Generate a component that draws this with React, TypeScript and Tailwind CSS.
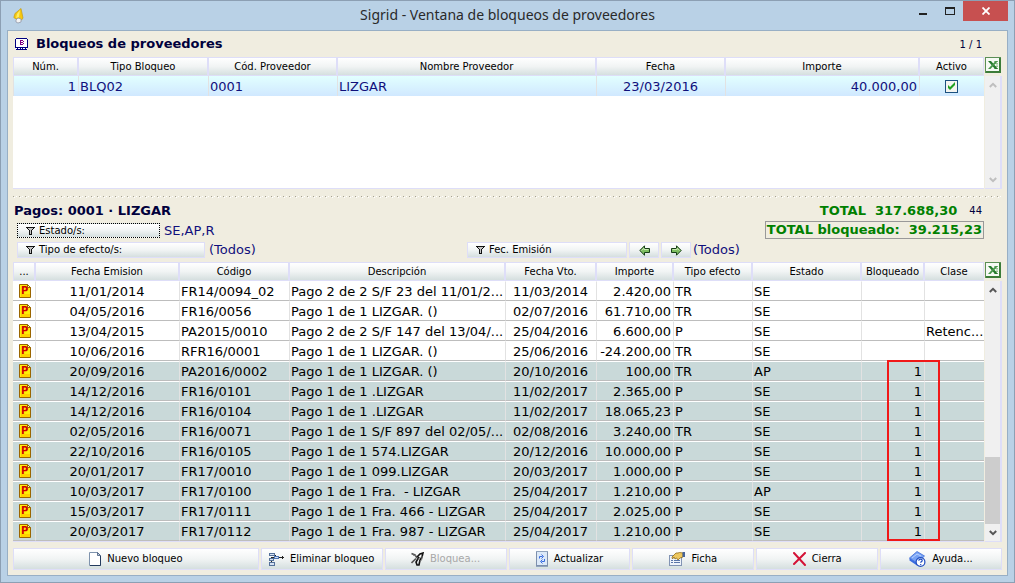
import React, { useState } from 'react';

interface Pago {
    emision: string;
    codigo: string;
    descripcion: string;
    vto: string;
    importe: string;
    tipo: string;
    estado: string;
    bloqueado?: number;
    clase?: string;
}

const pagos: Pago[] = [
    { emision: '11/01/2014', codigo: 'FR14/0094_02', descripcion: 'Pago 2 de 2 S/F 23 del 11/01/2...', vto: '11/03/2014', importe: '2.420,00', tipo: 'TR', estado: 'SE' },
    { emision: '04/05/2016', codigo: 'FR16/0056', descripcion: 'Pago 1 de 1 LIZGAR. ()', vto: '02/07/2016', importe: '61.710,00', tipo: 'TR', estado: 'SE' },
    { emision: '13/04/2015', codigo: 'PA2015/0010', descripcion: 'Pago 2 de 2 S/F 147 del 13/04/...', vto: '25/04/2016', importe: '6.600,00', tipo: 'P', estado: 'SE', clase: 'Retenc...' },
    { emision: '10/06/2016', codigo: 'RFR16/0001', descripcion: 'Pago 1 de 1 LIZGAR. ()', vto: '25/06/2016', importe: '-24.200,00', tipo: 'TR', estado: 'SE' },
    { emision: '20/09/2016', codigo: 'PA2016/0002', descripcion: 'Pago 1 de 1 LIZGAR. ()', vto: '20/10/2016', importe: '100,00', tipo: 'TR', estado: 'AP', bloqueado: 1 },
    { emision: '14/12/2016', codigo: 'FR16/0101', descripcion: 'Pago 1 de 1 .LIZGAR', vto: '11/02/2017', importe: '2.365,00', tipo: 'P', estado: 'SE', bloqueado: 1 },
    { emision: '14/12/2016', codigo: 'FR16/0104', descripcion: 'Pago 1 de 1 .LIZGAR', vto: '11/02/2017', importe: '18.065,23', tipo: 'P', estado: 'SE', bloqueado: 1 },
    { emision: '02/05/2016', codigo: 'FR16/0071', descripcion: 'Pago 1 de 1 S/F 897 del 02/05/...', vto: '02/08/2016', importe: '3.240,00', tipo: 'TR', estado: 'SE', bloqueado: 1 },
    { emision: '22/10/2016', codigo: 'FR16/0105', descripcion: 'Pago 1 de 1 574.LIZGAR', vto: '20/12/2016', importe: '10.000,00', tipo: 'P', estado: 'SE', bloqueado: 1 },
    { emision: '20/01/2017', codigo: 'FR17/0010', descripcion: 'Pago 1 de 1 099.LIZGAR', vto: '20/03/2017', importe: '1.000,00', tipo: 'P', estado: 'SE', bloqueado: 1 },
    { emision: '10/03/2017', codigo: 'FR17/0100', descripcion: 'Pago 1 de 1 Fra.  - LIZGAR', vto: '25/04/2017', importe: '1.210,00', tipo: 'P', estado: 'AP', bloqueado: 1 },
    { emision: '15/03/2017', codigo: 'FR17/0111', descripcion: 'Pago 1 de 1 Fra. 466 - LIZGAR', vto: '25/04/2017', importe: '2.025,00', tipo: 'P', estado: 'SE', bloqueado: 1 },
    { emision: '20/03/2017', codigo: 'FR17/0112', descripcion: 'Pago 1 de 1 Fra. 987 - LIZGAR', vto: '25/04/2017', importe: '1.210,00', tipo: 'P', estado: 'SE', bloqueado: 1 },
];

const face = 'bg-linear-to-b from-white via-[#f1f4f4] to-[#d5dfdf]';
const buttonBase = `flex items-center border border-[#dedef8] text-[10px] leading-none text-black ${face}`;
const iconProps = { shapeRendering: 'crispEdges' as const, className: 'shrink-0' };

const FlameIcon = () => (
    <svg width="12" height="16" viewBox="0 0 12 16">
        <path d="M8 .5 10 10 8.5 12 3 11 .8 9.500 2 5.500Z" fill="#f6c80e" stroke="#c39a18" strokeWidth=".7" />
        <path d="M7 2 4 6 3 10l3-1Z" fill="#ffec62" />
        <path d="m3 12 2-2 3 1v3l-3 1-2-1Z" fill="#f4f4f4" stroke="#9298a8" strokeWidth=".8" />
    </svg>
);

const BloqueoIcon = () => (
    <svg width="13" height="12" viewBox="0 0 13 12" {...iconProps}>
        <path d="M1 0h11v1h1v9h-1v1H1v-1H0V1h1Z" fill="#000080" />
        <path d="M1 1h11v8H1Z" fill="#fff" />
        <path d="M1 10h1v1H1ZM3 10h2v1H3ZM6 10h1v1H6ZM8 10h2v1H8ZM11 10h1v1h-1Z" fill="#fff" />
        <path d="M1 11h11v1H1Z" fill="#000080" />
        <path d="M5 2h3v1H5ZM5 4h3v1H5ZM5 6h3v1H5ZM5 2h1v5H5ZM8 3h1v1H8ZM8 5h1v1H8Z" fill="#800080" />
    </svg>
);

const PagoIcon = () => (
    <svg width="12" height="14" viewBox="0 0 12 14" className="mx-auto">
        <path d="M.5.5h8l3 3v10H.5Z" fill="#ffee0a" stroke="#9a6500" />
        <path d="M2 10h9v3H2Z" fill="#ffd200" />
        <path d="M8.500.5v3h3Z" fill="#fff6b0" stroke="#9a6500" />
        <text x="2" y="10" fontFamily="DejaVu Sans" fontSize="10" fontWeight="bold" fill="#d00000">P</text>
    </svg>
);

const ExcelIcon = () => (
    <svg width="16" height="16" viewBox="0 0 16 16">
        <rect x=".5" y=".5" width="15" height="15" fill="#f6faf4" stroke="#5b8f56" />
        <path d="M15 1v14H1" fill="none" stroke="#3c7c38" strokeWidth="2" />
        <path d="M9 4.500h4M10 6.500h3M11 8h2M10 9.500h3M9 11.500h4" stroke="#7fb276" strokeWidth=".8" />
        <path d="M3 4h3l7 8h-3Z" fill="#257a2c" />
        <path d="M10.500 4h2.500L5.500 12H3Z" fill="#47964a" />
    </svg>
);

const FilterIcon = () => (
    <svg width="9" height="8" viewBox="0 0 9 8" {...iconProps}>
        <path d="M0 0h9v1H8v1H7v1H6v5H3V3H2V2H1V1H0Z" fill="#111" />
        <path d="M2 1h5v1H6v1H5v4H4V3H3V2H2Z" fill="#c4c4c4" />
    </svg>
);

const ArrowIcon = ({ right }: { right?: boolean }) => (
    <svg width="11" height="11" viewBox="0 0 11 11" className={right ? '-scale-x-100' : ''}>
        <path d="M.8 5.500 5.500.8v2.700h5v4h-5v2.700Z" fill="#7dbd60" stroke="#173f17" />
        <path d="M2.500 5.500 5 3.200v1.300h4.500" fill="none" stroke="#c6e8ae" />
    </svg>
);

const PageIcon = () => (
    <svg width="12" height="14" viewBox="0 0 12 14">
        <path d="M.5.5h8l3 3v10H.5Z" fill="#fff" stroke="#7f93ad" />
        <path d="M11.500 4v9.500H1" fill="none" stroke="#243b5e" />
        <path d="M8.500.5v3h3Z" fill="#c4d1e2" stroke="#40577a" strokeWidth=".8" />
    </svg>
);

const RemoveIcon = () => (
    <svg width="15" height="13" viewBox="0 0 15 13" {...iconProps}>
        <path d="M2 4h1v5H2ZM6 2h1v2H6ZM3 4h3v1H3ZM10 4h5v1h-5ZM13 3h1v3h-1Z" fill="#222" />
        <path d="M0 0h6v3H0ZM0 5h5v3H0ZM0 9h6v4H0Z" fill="#54719a" />
        <path d="M5 3h5v3H5Z" fill="#4d74b4" />
        <path d="M1 1h4v1H1ZM1 6h3v1H1ZM1 10h4v2H1ZM6 4h3v1H6Z" fill="#d6e2f3" />
    </svg>
);

const BlockIcon = () => (
    <svg width="13" height="14" viewBox="0 0 13 14" fill="none">
        <path d="M.5 1.500 4 3l2 3M.5 11 5 6.500" stroke="#555" strokeWidth="1.600" />
        <path d="M6 5 9 2l3-1-1 4-2 3-1 5H6l-1-3 3-5" stroke="#111" strokeWidth="1.600" />
        <path d="m9 10 2-3V4M2 3l3 1M7 8l2-3" stroke="#777" />
    </svg>
);

const RefreshIcon = () => (
    <svg width="12" height="16" viewBox="0 0 12 16">
        <rect x=".5" y=".5" width="11" height="15" fill="#dce9f8" stroke="#91a4bd" />
        <path d="M.5 1v14M11.500 1v14M1 14.500h10" stroke="#7d90ad" />
        <path d="M3.500 7.500V5.500h3M5.500 3.500l2 2-2 2M8.500 8v2.500h-3M6.500 8.500l-2 2 2 2" fill="none" stroke="#376be0" />
    </svg>
);

const CardIcon = () => (
    <svg width="16" height="14" viewBox="0 0 16 14">
        <rect x=".5" y="3.500" width="12" height="10" fill="#eef3fa" stroke="#8294b4" />
        <path d="M2 8.500h2M5 8.500h6M2 10.500h2M5 10.500h6" stroke="#5b76a8" />
        <path d="m3 5 4-4h2l1.500-.5 3.500.5v4l-3 1-2 2-1.500-2L6 7 5 5 3.500 7Z" fill="#edc75e" stroke="#8e6b1b" strokeWidth=".8" />
        <path d="M13.500 0H16v5h-2.500Z" fill="#46659b" />
    </svg>
);

const CloseRedIcon = () => (
    <svg width="13" height="14" viewBox="0 0 13 14">
        <path d="m1 1 11 12M12 1 1 12" stroke="#d41236" strokeWidth="2" strokeLinecap="round" />
    </svg>
);

const HelpIcon = () => (
    <svg width="17" height="16" viewBox="0 0 17 16">
        <path d="M.5 7 8 .5 15.500 5 8 12Z" fill="#78a2f4" stroke="#3c6cd6" strokeWidth=".8" />
        <path d="M.5 7v2.500l7.500 5V12Z" fill="#3a6de0" />
        <path d="M3 7 8 3l4 2" stroke="#b7d1ff" fill="none" />
        <circle cx="11.500" cy="11" r="4.400" fill="#fff" stroke="#1c4bc0" strokeWidth="1.200" />
        <path d="M9.800 9.800c0-2.400 3.600-2.200 3.400-.2-.1 1-1.500.9-1.500 2.200M11.700 13v1" fill="none" stroke="#1c4bc0" strokeWidth="1.200" />
    </svg>
);

const Chevron = ({ down, color }: { down?: boolean; color: string }) => (
    <svg width="8" height="6" viewBox="0 0 8 6" className={down ? 'rotate-180' : ''}>
        <path d="M.8 5 4 1.800 7.200 5" fill="none" stroke={color} strokeWidth="2" />
    </svg>
);

const HeadCell = ({ children }: { children: React.ReactNode }) => (
    <th className={`h-[19px] overflow-hidden border border-[#dedef8] p-0 text-center text-[10px] leading-none font-normal whitespace-nowrap ${face}`}>
        {children}
    </th>
);

// Excel export button with the scroll bar of the grid below it
const SideBar = ({ color, thumb }: { color: string; thumb?: boolean }) => (
    <div className="flex w-[18px] shrink-0 flex-col pl-px">
        <button type="button" aria-label="Excel" className="flex h-[19px] items-start">
            <ExcelIcon />
        </button>
        <div className="flex flex-1 flex-col items-center border-r-2 border-b border-[#dedef8] bg-[#f0f0f0]">
            <div className="flex h-[17px] items-center"><Chevron color={color} /></div>
            <div className="flex-1" />
            {thumb && <div className="h-[67px] w-full bg-[#cdcdcd]" />}
            <div className="flex h-[17px] items-center"><Chevron down color={color} /></div>
        </div>
    </div>
);

const FilterButton = ({ label, className }: { label: string; className: string }) => (
    <button type="button" className={`${className} gap-1 pl-2`}>
        <FilterIcon />
        {label}
    </button>
);

const actions = [
    { label: 'Nuevo bloqueo', icon: <PageIcon />, wide: true },
    { label: 'Eliminar bloqueo', icon: <RemoveIcon /> },
    { label: 'Bloquea...', icon: <BlockIcon />, disabled: true },
    { label: 'Actualizar', icon: <RefreshIcon /> },
    { label: 'Ficha', icon: <CardIcon /> },
    { label: 'Cierra', icon: <CloseRedIcon /> },
    { label: 'Ayuda...', icon: <HelpIcon /> },
];

const App: React.FC = () => {
    const [activo, setActivo] = useState<boolean>(true);
    const cell = 'overflow-hidden border-l border-[#e2e2e2] pr-[2px] pl-px whitespace-pre';

    return (
        <div className="flex min-h-screen flex-col border border-[#8c9fb3] bg-[#b9d1e6] px-[6px] pb-[6px] font-['DejaVu_Sans',sans-serif] text-[13px] text-black">
            <header className="flex h-[29px] items-start">
                <div className="flex h-[29px] w-32 items-center pl-[6px]"><FlameIcon /></div>
                <h1 className="flex-1 pt-1 text-center font-['Noto_Sans',sans-serif] text-[14px] leading-5 text-[#2a2a2a]">Sigrid - Ventana de bloqueos de proveedores</h1>
                <div className="flex w-32 justify-end">
                    <button type="button" aria-label="Minimizar" className="flex h-5 w-[27px] items-center justify-center">
                        <svg width="8" height="10" {...iconProps}><path d="M0 7h8v2H0Z" fill="#222" /></svg>
                    </button>
                    <button type="button" aria-label="Maximizar" className="flex h-5 w-[27px] items-center justify-center">
                        <svg width="10" height="8" {...iconProps}><path d="M0 0h10v8H0ZM1 2v5h8V2Z" fill="#222" fillRule="evenodd" /></svg>
                    </button>
                    <button type="button" aria-label="Cerrar" className="flex h-5 w-[45px] items-center justify-center bg-[#c75050]">
                        <svg width="8" height="8"><path d="m.5.5 7 7M7.500.5l-7 7" stroke="#fff" strokeWidth="1.800" /></svg>
                    </button>
                </div>
            </header>

            <main className="flex flex-1 flex-col border border-[#98afc5] bg-[#f0ede0] px-[5px] pb-1">
                <div className="flex h-[26px] items-center gap-2 pr-5 pl-[2px]">
                    <BloqueoIcon />
                    <h2 className="flex-1 text-[13px] font-bold text-[#00003c]">Bloqueos de proveedores</h2>
                    <span className="text-[10px] text-[#00003c]">1 / 1</span>
                </div>

                <section className="flex h-[132px]">
                    <div className="flex flex-1 flex-col border-b border-[#dedef8] bg-white">
                        <table className="w-full table-fixed border-separate border-spacing-0">
                            <colgroup>
                                <col className="w-[65px]" />
                                <col className="w-[130px]" />
                                <col className="w-[129px]" />
                                <col />
                                <col className="w-[129px]" />
                                <col className="w-[194px]" />
                                <col className="w-[65px]" />
                            </colgroup>
                            <thead>
                                <tr>
                                    {['Núm.', 'Tipo Bloqueo', 'Cód. Proveedor', 'Nombre Proveedor', 'Fecha', 'Importe', 'Activo'].map(h => <HeadCell key={h}>{h}</HeadCell>)}
                                </tr>
                            </thead>
                            <tbody>
                                <tr className="h-5 bg-linear-to-b from-[#e2ffff] to-[#d0e8ff] leading-4 text-[#10107c]">
                                    <td className={`${cell} pt-[2px] pb-0 text-right`}>1</td>
                                    <td className={`${cell} pt-[2px] pb-0`}>BLQ02</td>
                                    <td className={`${cell} pt-[2px] pb-0`}>0001</td>
                                    <td className={`${cell} pt-[2px] pb-0`}>LIZGAR</td>
                                    <td className={`${cell} pt-[2px] pb-0 text-center`}>23/03/2016</td>
                                    <td className={`${cell} pt-[2px] pb-0 text-right`}>40.000,00</td>
                                    <td className={`${cell} py-0`}>
                                        <label className="relative mx-auto block size-[13px]">
                                            <input type="checkbox" aria-label="Activo" checked={activo} onChange={(e) => setActivo(e.target.checked)} className="block size-[13px] appearance-none border border-[#1c5180] bg-[#f4f4f0]" />
                                            {activo && (
                                                <svg width="13" height="13" viewBox="0 0 13 13" className="pointer-events-none absolute inset-0">
                                                    <path d="M3 5v3l2 2 5-5V2L5 7Z" fill="#21a121" />
                                                </svg>
                                            )}
                                        </label>
                                    </td>
                                </tr>
                            </tbody>
                        </table>
                    </div>
                    <SideBar color="#bfbfbf" />
                </section>

                <svg width="100%" height="12" className="block shrink-0">
                    <defs>
                        <pattern id="dots" width="6" height="12" patternUnits="userSpaceOnUse">
                            <rect x="0" y="7" width="1" height="1" fill="#a5a294" />
                            <rect x="1" y="8" width="1" height="1" fill="#fff" />
                            <rect x="3" y="7" width="1" height="1" fill="#fff" />
                        </pattern>
                    </defs>
                    <rect width="100%" height="12" fill="url(#dots)" />
                </svg>

                <div className="flex items-start justify-between pr-[18px]">
                    <div>
                        <h2 className="pl-px leading-5 font-bold text-[#00003c]">Pagos: 0001 · LIZGAR</h2>
                        <div className="flex h-[19px] items-center gap-1 pl-1">
                            <FilterButton label="Estado/s:" className={`flex h-[15px] w-[143px] items-center border border-dotted border-black text-[10px] leading-none ${face}`} />
                            <span className="text-[#10107c]">SE,AP,R</span>
                        </div>
                    </div>
                    <div className="flex flex-col items-end text-[#008000]">
                        <div className="flex items-center gap-3 pr-[2px] leading-5">
                            <strong className="whitespace-pre">TOTAL  317.688,30</strong>
                            <span className="text-[10px] text-[#00003c]">44</span>
                        </div>
                        <strong className="h-[18px] border border-[#999] px-px leading-4 whitespace-pre">TOTAL bloqueado:  39.215,23</strong>
                    </div>
                </div>
                <div className="flex h-5 items-center pl-1 text-[#10107c]">
                    <div className="flex w-[450px] items-center gap-1">
                        <FilterButton label="Tipo de efecto/s:" className={`${buttonBase} h-4 w-[188px]`} />
                        (Todos)
                    </div>
                    <div className="flex items-center gap-[2px]">
                        <FilterButton label="Fec. Emisión" className={`${buttonBase} h-4 w-40`} />
                        <button type="button" aria-label="Anterior" className={`${buttonBase} h-4 w-[30px] justify-center`}><ArrowIcon /></button>
                        <button type="button" aria-label="Siguiente" className={`${buttonBase} h-4 w-[30px] justify-center`}><ArrowIcon right /></button>
                        <span>(Todos)</span>
                    </div>
                </div>

                <section className="mt-[2px] flex">
                    <div className="relative flex-1 border-b border-[#dedef8] bg-white">
                        <table className="w-full table-fixed border-separate border-spacing-0">
                            <colgroup>
                                <col className="w-[22px]" />
                                <col className="w-36" />
                                <col className="w-[110px]" />
                                <col />
                                <col className="w-[91px]" />
                                <col className="w-[77px]" />
                                <col className="w-[79px]" />
                                <col className="w-[109px]" />
                                <col className="w-[63px]" />
                                <col className="w-[60px]" />
                            </colgroup>
                            <thead>
                                <tr>
                                    {['...', 'Fecha Emision', 'Código', 'Descripción', 'Fecha Vto.', 'Importe', 'Tipo efecto', 'Estado', 'Bloqueado', 'Clase'].map(h => <HeadCell key={h}>{h}</HeadCell>)}
                                </tr>
                            </thead>
                            <tbody>
                                {pagos.map(p => {
                                    const td = `${cell} border-b border-b-[#bdbdbd] border-t border-t-white pt-[2px] pb-0 leading-4`;
                                    return (
                                        <tr key={p.codigo} className={p.bloqueado ? 'h-5 bg-[#c9d9d9]' : 'h-5 bg-white'}>
                                            <td className="border-t border-b border-t-white border-b-[#bdbdbd] py-0 pr-0 pl-[2px]"><PagoIcon /></td>
                                            <td className={`${td} text-center`}>{p.emision}</td>
                                            <td className={td}>{p.codigo}</td>
                                            <td className={td}>{p.descripcion}</td>
                                            <td className={`${td} text-center`}>{p.vto}</td>
                                            <td className={`${td} text-right`}>{p.importe}</td>
                                            <td className={td}>{p.tipo}</td>
                                            <td className={td}>{p.estado}</td>
                                            <td className={`${td} text-right`}>{p.bloqueado}</td>
                                            <td className={td}>{p.clase}</td>
                                        </tr>
                                    );
                                })}
                            </tbody>
                        </table>
                        <div className="pointer-events-none absolute right-11 bottom-0 h-[181px] w-[53px] border-2 border-[#f01818]" />
                    </div>
                    <SideBar color="#555" thumb />
                </section>

                <footer className="mt-[6px] grid grid-cols-8 gap-[2px]">
                    {actions.map(a => (
                        <button key={a.label} type="button" disabled={a.disabled} className={`${buttonBase} h-[22px] justify-center gap-[6px] whitespace-nowrap disabled:text-[#a8a8a8] ${a.wide ? 'col-span-2' : ''}`}>
                            {a.icon}
                            {a.label}
                        </button>
                    ))}
                </footer>
            </main>
        </div>
    );
};

export default App;
